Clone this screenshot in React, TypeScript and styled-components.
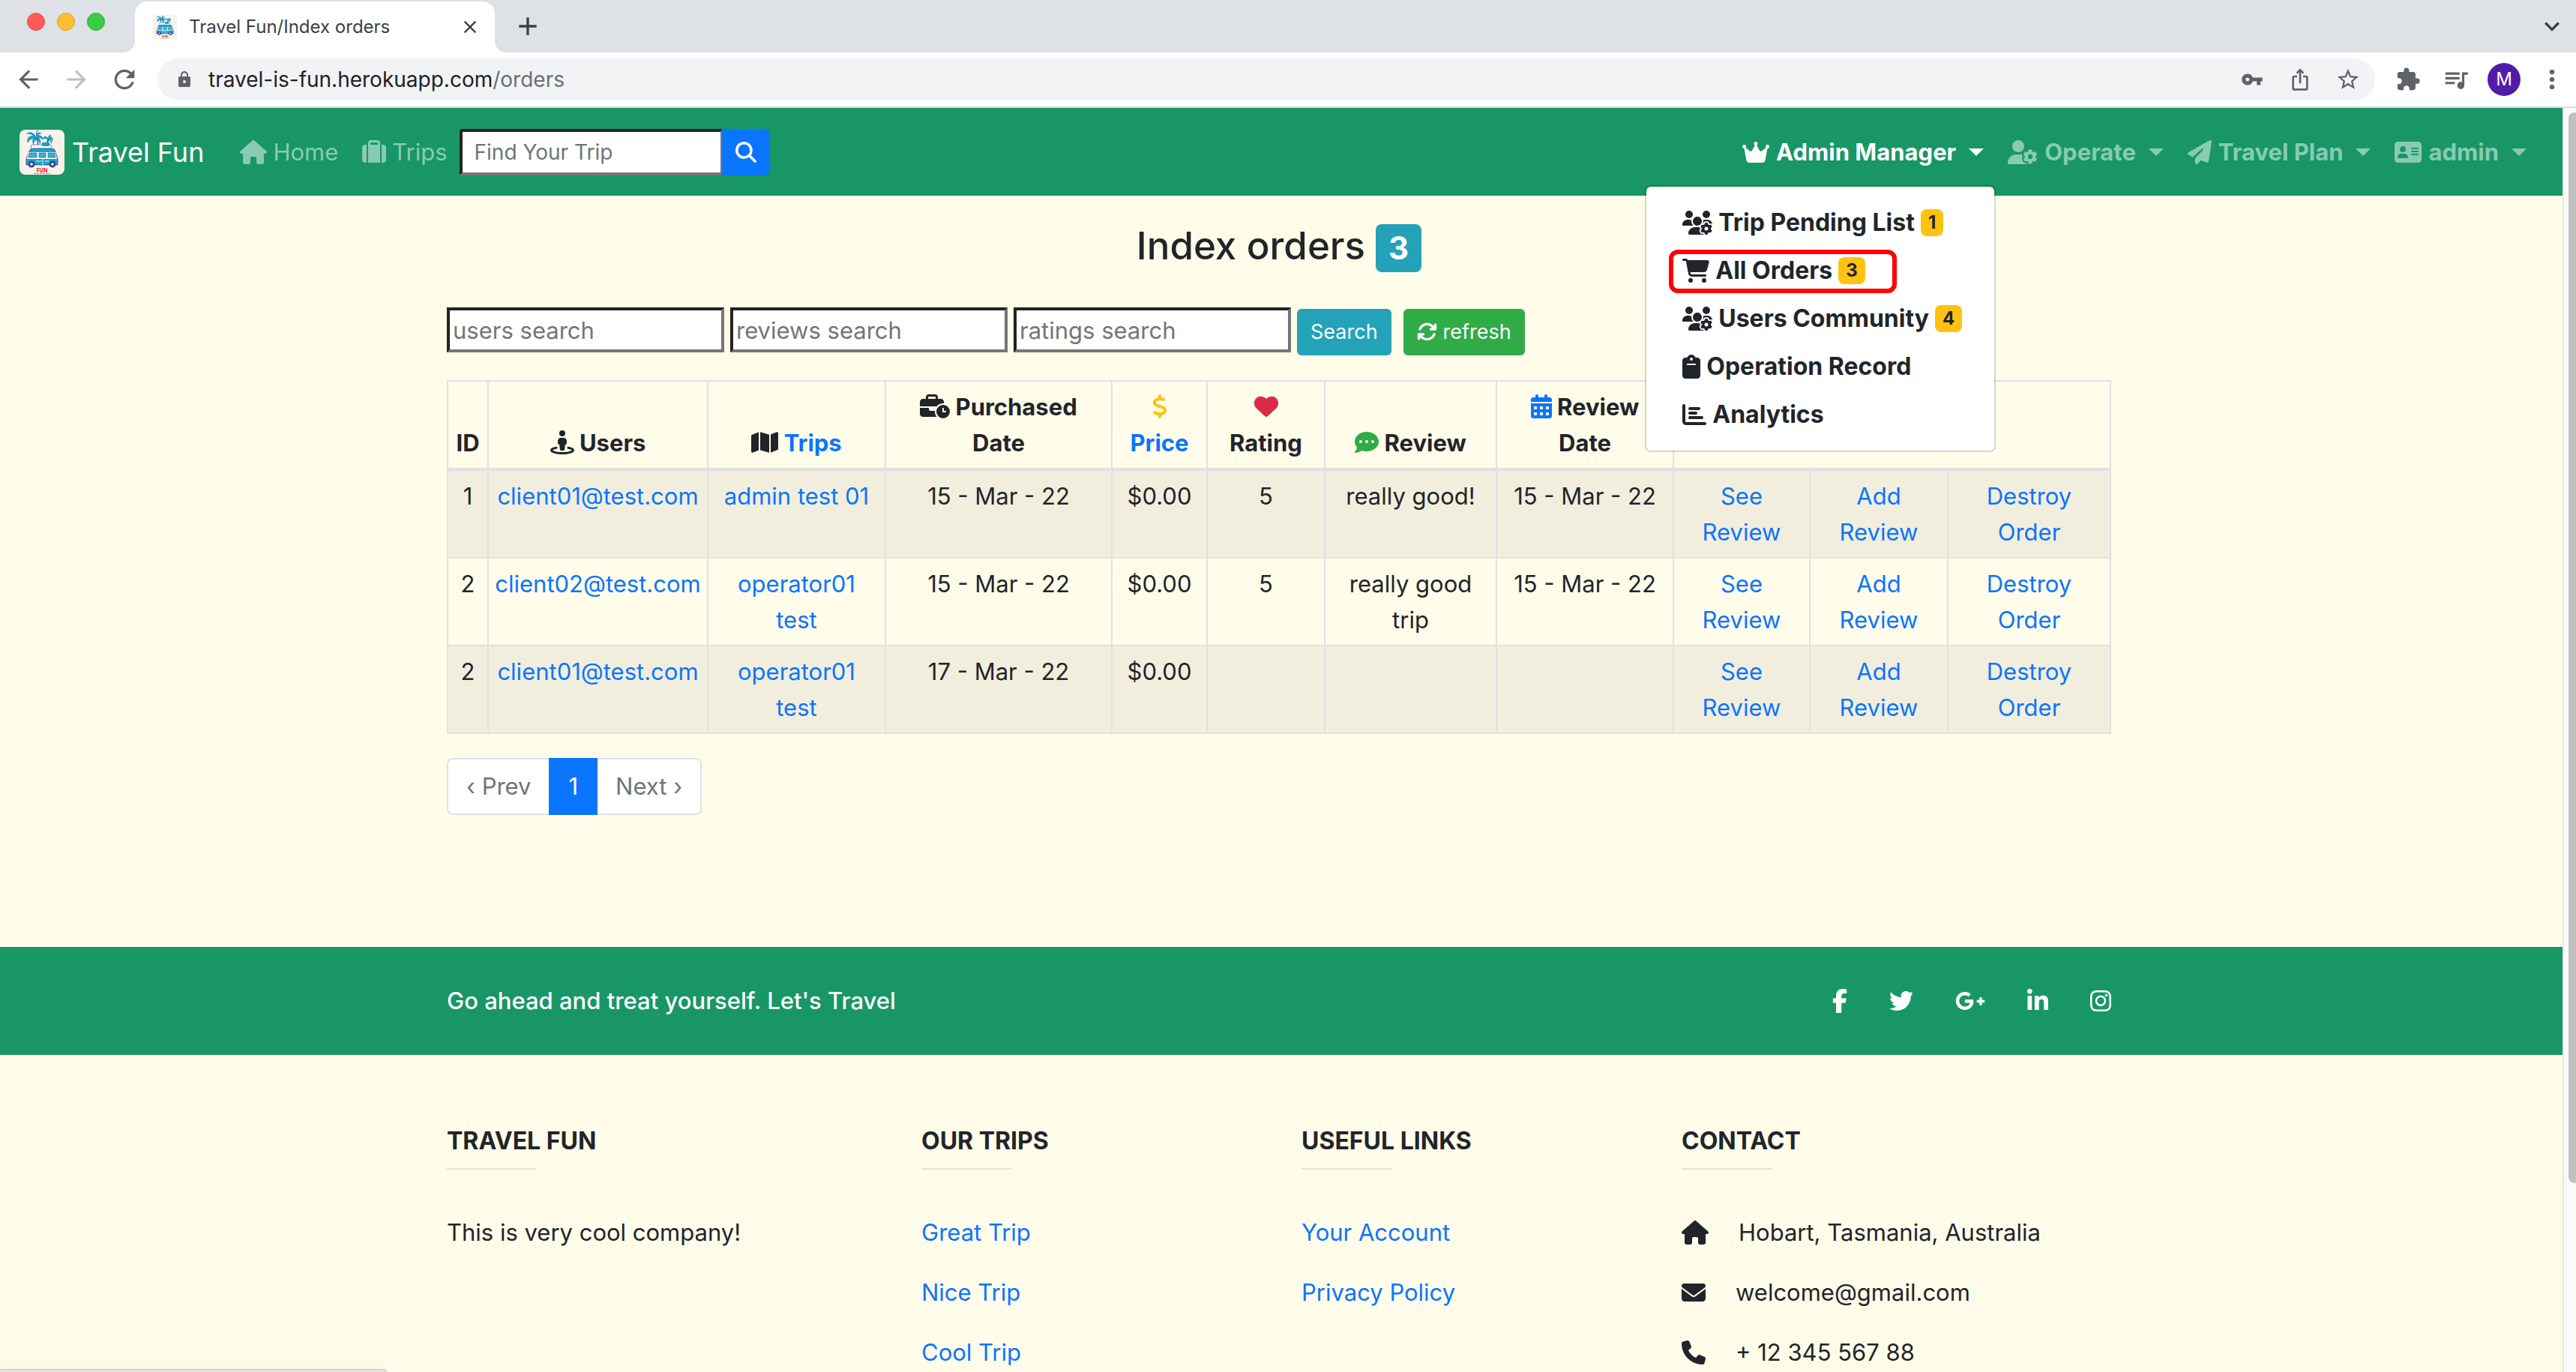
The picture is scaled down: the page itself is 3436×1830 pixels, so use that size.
import React from 'react';
import styled, { createGlobalStyle } from 'styled-components';
import {
  FaHouse, FaSuitcase, FaMagnifyingGlass, FaCrown, FaUserGear, FaPaperPlane, FaAddressCard, FaUsersGear,
  FaCartShopping, FaClipboard, FaChartBar, FaStreetView, FaMap, FaBusinessTime, FaDollarSign, FaHeart,
  FaCommentDots, FaCalendarDays, FaArrowsRotate, FaFacebookF, FaTwitter, FaGooglePlusG, FaLinkedinIn,
  FaInstagram, FaEnvelope, FaPhone,
} from 'react-icons/fa6';
import {
  MdArrowBack, MdArrowForward, MdRefresh, MdLock, MdVpnKey, MdIosShare, MdStarBorder, MdExtension,
  MdQueueMusic, MdMoreVert, MdExpandMore, MdClose, MdAdd,
} from 'react-icons/md';

const c = {
  green: '#189666', cream: '#fffce9', ink: '#212529', link: '#0a75ff', line: '#dee2e6',
  faded: '#88cbb2', teal: '#24a2b8', ok: '#31ab48', yellow: '#ffc210', red: '#dc2a47', grey: '#5f6368',
};

const Global = createGlobalStyle`
  *, *::before, *::after { box-sizing: border-box; }
  body { margin: 0; overflow: hidden; font: 400 31px/48px Inter, "Noto Sans", sans-serif; color: ${c.ink}; }
  a { color: ${c.link}; text-decoration: none; }
  button, input { font-family: inherit; }
  p, h1, h2, ul { margin: 0; padding: 0; }
  ul { list-style: none; }
`;

const Browser = styled.div`display: flex; flex-direction: column; height: 100vh;`;

/* Browser chrome */
const TabStrip = styled.div`display: flex; align-items: center; height: 70px; padding: 0 22px 0 36px; background: #dee1e6;`;
const Lights = styled.div`display: flex; gap: 16px; height: 24px; margin: 0 40px 12px 0;`;
const Light = styled.span<{ $fill: string; $edge: string }>`
  width: 24px; height: 24px; border-radius: 50%; background: ${p => p.$fill}; border: 1px solid ${p => p.$edge};
`;
const Tab = styled.div`
  position: relative; align-self: flex-end; display: flex; align-items: center; width: 480px; height: 68px;
  padding: 0 20px 0 24px; border-radius: 16px 16px 0 0; background: #fff; font-size: 24px; line-height: 32px; color: #3c4043;
  &::before, &::after { content: ''; position: absolute; bottom: 0; width: 16px; height: 16px; }
  &::before { right: 100%; background: radial-gradient(circle at 0 0, transparent 16px, #fff 16px); }
  &::after { left: 100%; background: radial-gradient(circle at 100% 0, transparent 16px, #fff 16px); }
`;
const TabTitle = styled.span`flex: 1; margin-left: 16px;`;
const ChromeButton = styled.button<{ $w: number; $size: number; $off?: boolean; $dark?: boolean }>`
  display: flex; align-items: center; justify-content: center; flex: none; width: ${p => p.$w}px; height: 48px; padding: 0;
  border: 0; background: none; font-size: ${p => p.$size}px; color: ${p => (p.$off ? '#bdc1c6' : p.$dark ? '#3c4043' : c.grey)};
  svg { flex: none; }
`;
const TabList = styled.div`display: flex; margin-left: auto;`;
const NewTab = styled.div`margin-left: 20px;`;
const Toolbar = styled.div`
  display: flex; align-items: center; height: 74px; padding-left: 6px; background: #fff; border-bottom: 2px solid #dadcda;
`;
const AddressBar = styled.div`
  display: flex; align-items: center; flex: 1; height: 56px; margin: 0 12px; padding: 0 4px 0 24px; border-radius: 28px;
  background: #f1f3f4; color: ${c.grey};
`;
const Url = styled.span`flex: 1; margin-left: 20px; font-size: 28px; color: #202124; span { color: #6b6f73; }`;
const Avatar = styled.span`
  width: 44px; height: 44px; border-radius: 50%; background: #511da8; color: #fff; font-size: 24px; line-height: 44px;
`;

/* Page shell */
const Viewport = styled.div`display: flex; flex: 1; min-height: 0; overflow: hidden;`;
const Page = styled.div`position: relative; flex: 1; overflow: hidden; background: ${c.cream};`;
const ScrollTrack = styled.div`
  flex: none; width: 18px; padding: 6px 0 0 6px; overflow: hidden; background: #fafafa; border-left: 2px solid #e8e8e8;
`;
const ScrollThumb = styled.div`width: 16px; height: 85%; border-radius: 8px; background: #c1c1c1;`;
const StatusEdge = styled.div`
  position: absolute; left: 0; bottom: 0; width: 516px; height: 4px; background: #dee1e6; border-top: 1px solid #c9c9bd;
  border-top-right-radius: 4px; box-shadow: 0 0 20px rgba(0, 0, 0, .12);
`;

/* Glyph 32px tall; the width follows the proportions of each icon */
const Icon = styled.span<{ $w?: number; $color?: string }>`
  display: inline-flex; align-items: center; height: 32px; vertical-align: -4px; color: ${p => p.$color || 'inherit'};
  svg { width: ${p => p.$w || 32}px; height: 32px; }
`;

/* Navbar */
const Navbar = styled.nav`
  position: relative; z-index: 1; display: flex; align-items: center; height: 117px; padding: 0 32px 0 26px; background: ${c.green};
`;
const Brand = styled.a`display: flex; align-items: center; gap: 10px; margin-right: 32px; font-size: 36px; color: #fff;`;
const NavList = styled.ul`display: flex; align-items: center;`;
const NavItem = styled.li`position: relative;`;
const NavLink = styled.a<{ $bold?: boolean; $active?: boolean }>`
  display: flex; align-items: center; gap: ${p => (p.$bold ? 9 : 8)}px; padding: 16px; color: ${p => (p.$active ? '#fff' : c.faded)};
  font-weight: ${p => (p.$bold ? 700 : 400)}; white-space: nowrap;
`;
const Caret = styled.span`
  margin-left: 8px; border: 10px solid transparent; border-top-color: currentColor; border-bottom: 0;
`;
const TripSearch = styled.form`display: flex; height: 62px;`;
const TripInput = styled.input`
  width: 350px; padding: 8px 16px; font-size: 28px; background: #fff; border: 4px solid; border-radius: 4px 0 0 4px;
  border-color: #222 #767676 #767676 #222; border-right-width: 2px;
  &::placeholder { color: #6c757d; opacity: 1; }
`;
const TripButton = styled.button`
  display: flex; align-items: center; justify-content: center; width: 64px; padding: 0; border: 0; border-radius: 0 8px 8px 0;
  background: ${c.link}; color: #fff; font-size: 28px;
`;
const RightNav = styled(NavList)`margin-left: auto;`;
const Menu = styled.ul`
  position: absolute; top: 100%; right: 0; width: 468px; margin-top: 4px; padding: 16px 0; background: #fff; background-clip: padding-box;
  border: 2px solid rgba(0, 0, 0, .15); border-radius: 8px;
`;
const MenuLink = styled.a`
  display: flex; align-items: center; gap: 8px; padding: 8px 48px; font-size: 32px; font-weight: 700; color: ${c.ink}; white-space: nowrap;
`;
const Count = styled.span`
  padding: 6px 10px; border-radius: 8px; background: ${c.yellow}; font-size: 24px; line-height: 24px; font-weight: 700;
`;
const Highlight = styled.span`
  position: absolute; top: 84px; left: 30px; width: 304px; height: 58px; border: 6px solid #ff0008; border-radius: 12px;
`;

/* Main content */
const Container = styled.div`width: 100%; max-width: 2280px; margin: 0 auto; padding: 0 30px;`;
const Main = styled.main`padding: 31px 6px 176px 0;`;
const Title = styled.h1`
  display: flex; align-items: baseline; justify-content: center; gap: 14px; margin-bottom: 46px; font-size: 51px; line-height: 72px; font-weight: 500;
`;
const TitleCount = styled.span`
  padding: 11px 17px; border-radius: 8px; background: ${c.teal}; color: #fff; font-size: 42px; line-height: 42px; font-weight: 700;
`;
const Filters = styled.form`display: flex; align-items: flex-start; gap: 8px; height: 65px; margin-bottom: 32px;`;
const FilterInput = styled.input`
  width: 370px; height: 60px; padding: 0 4px; font-size: 31px; background: #fff; border: 4px solid; border-radius: 0;
  border-color: #222 #767676 #767676 #222;
  &::placeholder { color: #757575; opacity: 1; }
`;
const SmallButton = styled.button<{ $bg: string; $gap?: boolean }>`
  display: flex; align-items: center; align-self: center; gap: 8px; height: 62px; padding: 0 18px; border: 0; border-radius: 6px;
  margin-left: ${p => (p.$gap ? '8px' : 0)}; background: ${p => p.$bg}; color: #fff; font-size: 27px;
`;

const Table = styled.table`
  width: 100%; table-layout: fixed; border-collapse: collapse; margin-bottom: 32px; text-align: center;
  th, td { padding: 10px 9px 9px; border: 2px solid ${c.line}; }
  th { vertical-align: bottom; border-bottom-width: 4px; font-weight: 700; }
  td { vertical-align: top; }
  td:nth-child(-n + 2), th:first-child { white-space: nowrap; padding-left: 0; padding-right: 0; }
  tbody tr:nth-child(odd) { background: #f2eedd; }
`;
const Pager = styled.ul`display: flex;`;
const PageLink = styled.a<{ $active?: boolean }>`
  display: block; height: 76px; padding: 16px 24px; line-height: 40px; border: 2px solid ${p => (p.$active ? c.link : c.line)};
  background: ${p => (p.$active ? c.link : '#fff')}; color: ${p => (p.$active ? '#fff' : '#6c757d')};
  li + li & { border-left-width: ${p => (p.$active ? '2px' : 0)}; }
  li:first-child & { border-right: 0; border-radius: 8px 0 0 8px; }
  li:last-child & { border-radius: 0 8px 8px 0; }
`;

/* Footer */
const Band = styled.div`padding: 48px 6px 48px 0; background: ${c.green}; color: #fff; font-weight: 500;`;
const BandRow = styled(Container)`display: flex; align-items: center; justify-content: space-between;`;
const Socials = styled.div`display: flex; align-items: center; gap: 56px; a { display: flex; color: #fff; }`;
const FooterBody = styled.div`padding: 96px 6px 0 0;`;
const Columns = styled(Container)`display: grid; grid-template-columns: 633fr 507fr 507fr 573fr;`;
const ColumnTitle = styled.h2`font-size: 32px; line-height: 38px; font-weight: 700; text-transform: uppercase;`;
const Rule = styled.hr`width: 120px; height: 2px; margin: 17px 0 60px; border: 0; background: #e6e3d1;`;
const Line = styled.p`display: flex; align-items: center; gap: 40px; margin-bottom: 32px;`;

const Logo = ({ size, radius = 0 }: { size: number; radius?: number }) => (
  <svg width={size} height={size} viewBox="0 0 60 60" aria-hidden="true">
    <rect width="60" height="60" rx={radius} fill="#faf2ea" />
    <g fill="#1c9fc0">
      <path d="M22 9C18 2 12 2 9 6q6-1 9 2C11 8 9 13 11 18q2-5 7-6-2 4 1 9 0-6 4-8 4 3 4 7 3-5-1-9 3 0 6 3 0-6-7-7 2-2 5-2-3-3-7 0 0-3 3-5-5 0-4 9z" />
      <path d="M38 11c-3-4-7-2-7 2q3-2 6 0-2 2-1 5 2-4 4-4 2 2 2 5 3-4 0-6 2 0 3 2 0-6-4-6 0-1 2-2-4-1-5 4z" />
    </g>
    <path d="M22 11c3 4 3 8 2 12M39 13c-1 3-2 5-2 9" fill="none" stroke="#4b5aa0" strokeWidth="1.500" />
    <rect x="15" y="20" width="28" height="6" rx="3" fill="#fff" stroke="#5c6aa8" strokeWidth=".8" />
    <rect x="30" y="17" width="10" height="5" rx="1" fill="#1c9fc0" />
    <path d="M13 29q1-4 5-4h24q5 0 6 4l3 10v8H9v-8z" fill="#1aa5c4" stroke="#35458f" strokeWidth=".8" />
    <path d="M12 30h36l2 9H10z" fill="#fff" />
    <path d="M13 31h10v6H12zM26 31h9v6h-9zM38 31h9l1 6H38z" fill="#2fb6cc" stroke="#35458f" strokeWidth=".6" />
    <path d="M31 38v9M22 42h7M34 42h5" stroke="#e8f6f6" />
    <circle cx="16" cy="46" r="4.500" fill="#35458f" /><circle cx="44" cy="46" r="4.500" fill="#35458f" />
    <circle cx="16" cy="46" r="1.800" fill="#fff" /><circle cx="44" cy="46" r="1.800" fill="#fff" />
    <text x="30" y="57" textAnchor="middle" fontFamily="Inter, sans-serif" fontSize="7" fontWeight="800" fill="#f2263b">FUN</text>
    <path d="M19 58.500h22" stroke="#7d85b5" strokeDasharray="3 1" />
  </svg>
);

const menu = [
  { icon: <FaUsersGear />, w: 40, label: 'Trip Pending List', count: 1 },
  { icon: <FaCartShopping />, w: 36, label: 'All Orders', count: 3, marked: true },
  { icon: <FaUsersGear />, w: 40, label: 'Users Community', count: 4 },
  { icon: <FaClipboard />, w: 24, label: 'Operation Record' },
  { icon: <FaChartBar />, w: 32, label: 'Analytics' },
];

const columnWidths = [54, 293, 237, 302, 127, 157, 229, 236, 182, 184, 217];

const orders = [
  { id: 1, user: 'client01@test.com', trip: 'admin test 01', bought: '15 - Mar - 22', rating: '5', review: 'really good!', reviewed: '15 - Mar - 22' },
  { id: 2, user: 'client02@test.com', trip: 'operator01 test', bought: '15 - Mar - 22', rating: '5', review: 'really good trip', reviewed: '15 - Mar - 22' },
  { id: 2, user: 'client01@test.com', trip: 'operator01 test', bought: '17 - Mar - 22', rating: '', review: '', reviewed: '' },
];

const socials = [
  { name: 'Facebook', icon: <FaFacebookF />, w: 20 },
  { name: 'Twitter', icon: <FaTwitter />, w: 32 },
  { name: 'Google Plus', icon: <FaGooglePlusG />, w: 40 },
  { name: 'LinkedIn', icon: <FaLinkedinIn />, w: 28 },
  { name: 'Instagram', icon: <FaInstagram />, w: 28 },
];

const BrowserChrome = () => (
  <header>
    <TabStrip>
      <Lights>
        <Light $fill="#ff5b58" $edge="#e24b48" />
        <Light $fill="#ffbd30" $edge="#e0a028" />
        <Light $fill="#38cd42" $edge="#2bb033" />
      </Lights>
      <Tab>
        <Logo size={32} />
        <TabTitle>Travel Fun/Index orders</TabTitle>
        <ChromeButton $w={26} $size={28} $dark aria-label="Close tab"><MdClose /></ChromeButton>
      </Tab>
      <NewTab><ChromeButton $w={48} $size={40} $dark aria-label="New tab"><MdAdd /></ChromeButton></NewTab>
      <TabList><ChromeButton $w={20} $size={40} $dark aria-label="Search tabs"><MdExpandMore /></ChromeButton></TabList>
    </TabStrip>
    <Toolbar>
      <ChromeButton $w={64} $size={38} aria-label="Back"><MdArrowBack /></ChromeButton>
      <ChromeButton $w={64} $size={38} $off aria-label="Forward"><MdArrowForward /></ChromeButton>
      <ChromeButton $w={64} $size={40} aria-label="Reload"><MdRefresh /></ChromeButton>
      <AddressBar>
        <MdLock size={24} />
        <Url>travel-is-fun.herokuapp.com<span>/orders</span></Url>
        <ChromeButton $w={64} $size={30} aria-label="Passwords"><MdVpnKey /></ChromeButton>
        <ChromeButton $w={64} $size={32} aria-label="Share"><MdIosShare /></ChromeButton>
        <ChromeButton $w={64} $size={34} aria-label="Bookmark"><MdStarBorder /></ChromeButton>
      </AddressBar>
      <ChromeButton $w={64} $size={34} aria-label="Extensions"><MdExtension /></ChromeButton>
      <ChromeButton $w={64} $size={38} aria-label="Media"><MdQueueMusic /></ChromeButton>
      <ChromeButton $w={64} $size={24} aria-label="Profile"><Avatar>M</Avatar></ChromeButton>
      <ChromeButton $w={64} $size={40} aria-label="Menu"><MdMoreVert /></ChromeButton>
    </Toolbar>
  </header>
);

const TopNav = () => (
  <Navbar>
    <Brand href="#"><Logo size={60} radius={8} />Travel Fun</Brand>
    <NavList>
      <NavItem><NavLink href="#"><Icon $w={36}><FaHouse /></Icon>Home</NavLink></NavItem>
      <NavItem><NavLink href="#"><Icon><FaSuitcase /></Icon>Trips</NavLink></NavItem>
    </NavList>
    <TripSearch>
      <TripInput type="search" placeholder="Find Your Trip" aria-label="Find Your Trip" />
      <TripButton type="button" aria-label="Search trips"><FaMagnifyingGlass /></TripButton>
    </TripSearch>
    <RightNav>
      <NavItem>
        <NavLink href="#" $bold $active><Icon $w={36}><FaCrown /></Icon>Admin Manager<Caret /></NavLink>
        <Menu>
          {menu.map(m => (
            <li key={m.label}>
              <MenuLink href="#"><Icon $w={m.w}>{m.icon}</Icon>{m.label}{m.count && <Count>{m.count}</Count>}</MenuLink>
              {m.marked && <Highlight />}
            </li>
          ))}
        </Menu>
      </NavItem>
      <NavItem><NavLink href="#" $bold><Icon $w={40}><FaUserGear /></Icon>Operate<Caret /></NavLink></NavItem>
      <NavItem><NavLink href="#" $bold><Icon><FaPaperPlane /></Icon>Travel Plan<Caret /></NavLink></NavItem>
      <NavItem><NavLink href="#" $bold><Icon $w={36}><FaAddressCard /></Icon>admin<Caret /></NavLink></NavItem>
    </RightNav>
  </Navbar>
);

const Orders = () => (
  <Main>
    <Container>
      <Title>Index orders <TitleCount>3</TitleCount></Title>
      <Filters>
        <FilterInput placeholder="users search" aria-label="users search" />
        <FilterInput placeholder="reviews search" aria-label="reviews search" />
        <FilterInput placeholder="ratings search" aria-label="ratings search" />
        <SmallButton type="button" $bg={c.teal}>Search</SmallButton>
        <SmallButton type="button" $bg={c.ok} $gap><FaArrowsRotate />refresh</SmallButton>
      </Filters>
      <Table>
        <colgroup>{columnWidths.map((w, i) => <col key={i} style={{ width: w }} />)}</colgroup>
        <thead>
          <tr>
            <th>ID</th>
            <th><Icon><FaStreetView /></Icon> Users</th>
            <th><Icon $w={36}><FaMap /></Icon> <a href="#">Trips</a></th>
            <th><Icon $w={40}><FaBusinessTime /></Icon> Purchased Date</th>
            <th><Icon $w={20} $color={c.yellow}><FaDollarSign /></Icon><br /><a href="#">Price</a></th>
            <th><Icon $color={c.red}><FaHeart /></Icon><br />Rating</th>
            <th><Icon $color={c.ok}><FaCommentDots /></Icon> Review</th>
            <th><Icon $w={28} $color={c.link}><FaCalendarDays /></Icon> Review Date</th>
            <th colSpan={3} />
          </tr>
        </thead>
        <tbody>
          {orders.map((o, i) => (
            <tr key={i}>
              <td>{o.id}</td>
              <td><a href="#">{o.user}</a></td>
              <td><a href="#">{o.trip}</a></td>
              <td>{o.bought}</td>
              <td>$0.00</td>
              <td>{o.rating}</td>
              <td>{o.review}</td>
              <td>{o.reviewed}</td>
              <td><a href="#">See Review</a></td>
              <td><a href="#">Add Review</a></td>
              <td><a href="#">Destroy Order</a></td>
            </tr>
          ))}
        </tbody>
      </Table>
      <Pager>
        <li><PageLink href="#">‹ Prev</PageLink></li>
        <li><PageLink href="#" $active>1</PageLink></li>
        <li><PageLink href="#">Next ›</PageLink></li>
      </Pager>
    </Container>
  </Main>
);

const Footer = () => (
  <footer>
    <Band>
      <BandRow>
        <span>Go ahead and treat yourself. Let's Travel</span>
        <Socials>{socials.map(s => <a key={s.name} href="#" aria-label={s.name}><Icon $w={s.w}>{s.icon}</Icon></a>)}</Socials>
      </BandRow>
    </Band>
    <FooterBody>
      <Columns>
        <section>
          <ColumnTitle>Travel Fun</ColumnTitle><Rule />
          <Line>This is very cool company!</Line>
        </section>
        <section>
          <ColumnTitle>Our Trips</ColumnTitle><Rule />
          <Line><a href="#">Great Trip</a></Line>
          <Line><a href="#">Nice Trip</a></Line>
          <Line><a href="#">Cool Trip</a></Line>
        </section>
        <section>
          <ColumnTitle>Useful Links</ColumnTitle><Rule />
          <Line><a href="#">Your Account</a></Line>
          <Line><a href="#">Privacy Policy</a></Line>
        </section>
        <section>
          <ColumnTitle>Contact</ColumnTitle><Rule />
          <Line><Icon $w={36}><FaHouse /></Icon>Hobart, Tasmania, Australia</Line>
          <Line><Icon><FaEnvelope /></Icon>welcome@gmail.com</Line>
          <Line><Icon><FaPhone /></Icon>+ 12 345 567 88</Line>
        </section>
      </Columns>
    </FooterBody>
  </footer>
);

export default function App() {
  return (
    <Browser>
      <Global />
      <BrowserChrome />
      <Viewport>
        <Page>
          <TopNav />
          <Orders />
          <Footer />
          <StatusEdge />
        </Page>
        <ScrollTrack><ScrollThumb /></ScrollTrack>
      </Viewport>
    </Browser>
  );
}
